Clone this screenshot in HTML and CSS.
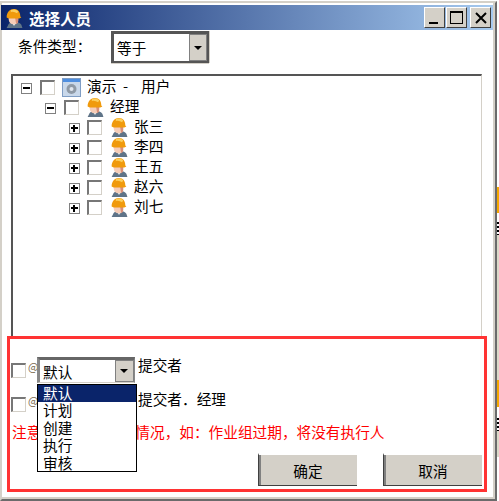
FILE: index.html
```html
<!DOCTYPE html>
<html lang="zh-CN">
<head>
    <meta charset="UTF-8">
    <title>选择人员</title>
    <link rel="stylesheet" href="styles.css">
</head>
<body>
    <svg class="defs" width="0" height="0">
        <symbol id="worker" viewBox="1 0 16 19">
            <path d="M3 17c1-3 3-4 6-4s6 1 7 3l1 3H2z" fill="#5f7488"/>
            <path d="M7 14l2 3 2-3z" fill="#e8eef2"/>
            <path d="M4 8h9v4c0 2-2 3.500-4.500 3.500S4 14 4 11z" fill="#f6cdb8"/>
            <path d="M10 9h3v3c0 2-1 3-2 3z" fill="#d98f78"/>
            <path d="M2 9c0-5 3-8 7-8s6 3 6 7l1 1-2 1H4z" fill="#f09a0c"/>
            <path d="M6 2c2-1 5-1 7 1l-1 2c-2-1-4-2-6-1z" fill="#fbcf5e"/>
        </symbol>
    </svg>

    <div class="side-strip">
        <div class="side-band orange-a"></div>
        <div class="side-band mark-a"></div>
        <div class="side-band pale-a"></div>
        <div class="side-band orange-b"></div>
        <div class="side-band mark-b"></div>
        <div class="side-band pale-b"></div>
    </div>

    <div class="window">
        <div class="titlebar">
            <svg class="title-icon"><use href="#worker"/></svg>
            <span class="title-text">选择人员</span>
            <div class="win-btns">
                <div class="win-btn"><span class="min-mark"></span></div>
                <div class="win-btn"><span class="max-mark"></span></div>
                <div class="win-btn close-btn">
                    <svg width="12" height="12" viewBox="0 0 12 12"><path d="M1 1l10 10M11 1L1 11" stroke="#000" stroke-width="2"/></svg>
                </div>
            </div>
        </div>

        <div class="cond-row">
            <span class="cond-label">条件类型：</span>
            <div class="combo cond-combo">
                <span class="combo-value">等于</span>
                <span class="combo-arrow"></span>
            </div>
        </div>

        <div class="tree">
            <div class="tree-row">
                <span class="expander minus"></span>
                <span class="check"></span>
                <svg class="demo-icon" viewBox="0 0 19 19">
                    <rect x="0.500" y="0.500" width="18" height="18" fill="#c9d8ea" stroke="#7f9dc4"/>
                    <rect x="1" y="1" width="17" height="3" fill="#4f8fe0"/>
                    <circle cx="9.500" cy="11" r="5" fill="#8f9aa6"/>
                    <circle cx="9.500" cy="11" r="2" fill="#dfe6ee"/>
                </svg>
                <span class="node-text">演示  -    用户</span>
            </div>
            <div class="tree-row lvl2">
                <span class="expander minus"></span>
                <span class="check"></span>
                <svg class="worker-icon"><use href="#worker"/></svg>
                <span class="node-text">经理</span>
            </div>
            <div class="tree-row lvl3">
                <span class="expander plus"></span>
                <span class="check"></span>
                <svg class="worker-icon"><use href="#worker"/></svg>
                <span class="node-text">张三</span>
            </div>
            <div class="tree-row lvl3">
                <span class="expander plus"></span>
                <span class="check"></span>
                <svg class="worker-icon"><use href="#worker"/></svg>
                <span class="node-text">李四</span>
            </div>
            <div class="tree-row lvl3">
                <span class="expander plus"></span>
                <span class="check"></span>
                <svg class="worker-icon"><use href="#worker"/></svg>
                <span class="node-text">王五</span>
            </div>
            <div class="tree-row lvl3">
                <span class="expander plus"></span>
                <span class="check"></span>
                <svg class="worker-icon"><use href="#worker"/></svg>
                <span class="node-text">赵六</span>
            </div>
            <div class="tree-row lvl3">
                <span class="expander plus"></span>
                <span class="check"></span>
                <svg class="worker-icon"><use href="#worker"/></svg>
                <span class="node-text">刘七</span>
            </div>
        </div>

        <div class="lower-panel">
            <div class="opt-row first">
                <span class="check"></span>
                <span class="at-mark">@</span>
                <div class="combo opt-combo">
                    <span class="combo-value">默认</span>
                    <span class="combo-arrow"></span>
                </div>
                <span class="opt-text">提交者</span>
            </div>
            <div class="opt-row second">
                <span class="check"></span>
                <span class="at-mark">@</span>
                <div class="opt-combo-spacer"></div>
                <span class="opt-text">提交者．经理</span>
            </div>
            <div class="note">
                <span>注意</span>
                <span class="note-rest">情况，如：作业组过期，将没有执行人</span>
            </div>
            <div class="btn-row">
                <div class="btn">确定</div>
                <div class="btn">取消</div>
            </div>
            <ul class="drop-list">
                <li class="selected">默认</li>
                <li>计划</li>
                <li>创建</li>
                <li>执行</li>
                <li>审核</li>
            </ul>
            <div class="red-box"></div>
        </div>
    </div>
</body>
</html>
```

FILE: styles.css
```css
html, body {
    margin: 0;
    padding: 0;
    height: 501px;
    overflow: hidden;
    background: #fff;
    font-family: "Noto Sans CJK SC", "Liberation Sans", sans-serif;
    font-size: 14.67px;
    color: #000;
}
.defs {
    position: absolute;
}
.side-strip {
    position: absolute;
    left: 497px;
    top: 0;
    width: 2px;
    height: 501px;
}
.side-band {
    position: absolute;
    left: 0;
    width: 2px;
}
.orange-a {
    top: 187px;
    height: 26px;
    background: #f5a800;
}
.mark-a {
    top: 222px;
    height: 13px;
    background: repeating-linear-gradient(to bottom, #000 0, #000 2px, #fff 2px, #fff 4px);
}
.pale-a {
    top: 235px;
    height: 145px;
    background: #dcd9c9;
}
.orange-b {
    top: 380px;
    height: 27px;
    background: #f5a800;
}
.mark-b {
    top: 418px;
    height: 13px;
    background: repeating-linear-gradient(to bottom, #000 0, #000 2px, #fff 2px, #fff 4px);
}
.pale-b {
    top: 431px;
    height: 26px;
    background: #dcd9c9;
}
.window {
    position: relative;
    box-sizing: border-box;
    width: 497px;
    height: 500px;
    margin-top: 1px;
    padding-right: 2px;
    background: #fff;
    border-top: 2px solid #d4d0c8;
    border-left: 2px solid #d4d0c8;
    border-right: 2px solid #6b6b6b;
    border-bottom: 2px solid #6b6b6b;
    box-shadow: inset -2px -2px 0 #d4d0c8;
    display: flex;
    flex-direction: column;
}
.titlebar {
    height: 25px;
    margin-top: 2px;
    margin-left: -1px;
    display: flex;
    align-items: center;
    background: linear-gradient(to right, #0a246a, #a6caf0);
    flex-shrink: 0;
}
.title-icon {
    width: 18px;
    height: 20px;
    margin-left: 4px;
}
.title-text {
    margin-left: 6px;
    color: #fff;
    font-weight: bold;
    font-size: 15.500px;
}
.win-btns {
    margin-left: auto;
    margin-right: 2px;
    display: flex;
    gap: 1px;
}
.win-btn {
    box-sizing: border-box;
    width: 21px;
    height: 21px;
    background: #d4d0c8;
    border-top: 1px solid #fff;
    border-left: 1px solid #fff;
    border-right: 1px solid #404040;
    border-bottom: 1px solid #404040;
    position: relative;
    display: flex;
    align-items: center;
    justify-content: center;
}
.close-btn {
    margin-left: 2px;
}
.min-mark {
    position: absolute;
    left: 4px;
    bottom: 3px;
    width: 9px;
    height: 2px;
    background: #000;
}
.max-mark {
    box-sizing: border-box;
    width: 13px;
    height: 13px;
    border: 1px solid #000;
    border-top-width: 2px;
}
.cond-row {
    height: 34px;
    display: flex;
    align-items: center;
    padding-left: 16px;
    flex-shrink: 0;
}
.cond-label {
    width: 93px;
    margin-top: -3px;
}
.combo {
    box-sizing: border-box;
    display: flex;
    align-items: center;
    background: #fff;
}
.cond-combo {
    width: 98px;
    height: 32px;
    border-top: 3px solid #555;
    border-left: 3px solid #555;
    border-right: 2px solid #555;
    border-bottom: 2px solid #555;
    box-shadow: 0 1px 0 #d4d0c8, 1px 0 0 #d4d0c8;
}
.opt-combo {
    width: 98px;
    height: 26px;
    border-top: 3px solid #666;
    border-left: 3px solid #888;
    border-right: 1px solid #888;
    border-bottom: 1px solid #d4d0c8;
}
.combo-value {
    flex: 1;
    padding-left: 3px;
}
.combo-arrow {
    box-sizing: border-box;
    width: 18px;
    height: 100%;
    background: #d4d0c8;
    border: 1px solid #808080;
    position: relative;
}
.combo-arrow::after {
    content: "";
    position: absolute;
    left: 4px;
    top: 50%;
    margin-top: -2px;
    border-top: 4px solid #000;
    border-left: 4px solid transparent;
    border-right: 4px solid transparent;
}
.tree {
    box-sizing: border-box;
    margin: 10px 0 0 9px;
    width: 471px;
    height: 262px;
    padding-top: 2px;
    border-top: 2px solid #555;
    border-left: 2px solid #555;
    border-right: 1px solid #d4d0c8;
    flex-shrink: 0;
}
.tree-row {
    height: 20px;
    display: flex;
    align-items: center;
    padding-left: 8px;
}
.tree-row.lvl2 {
    padding-left: 32px;
}
.tree-row.lvl3 {
    padding-left: 56px;
}
.expander {
    box-sizing: border-box;
    width: 11px;
    height: 11px;
    border: 1px solid #808080;
    position: relative;
    flex-shrink: 0;
}
.expander::before {
    content: "";
    position: absolute;
    left: 1px;
    top: 3px;
    width: 7px;
    height: 2px;
    background: #000;
}
.expander.plus::after {
    content: "";
    position: absolute;
    left: 3px;
    top: 1px;
    width: 2px;
    height: 7px;
    background: #000;
}
.check {
    box-sizing: border-box;
    display: block;
    width: 15px;
    height: 15px;
    background: #fff;
    border-top: 2px solid #777;
    border-left: 2px solid #777;
    border-right: 1px solid #d4d0c8;
    border-bottom: 1px solid #d4d0c8;
    flex-shrink: 0;
}
.tree-row .check {
    margin-left: 8px;
    margin-top: -1px;
}
.tree-row.lvl3 .check {
    margin-left: 7px;
    margin-top: -2px;
}
.worker-icon {
    width: 18px;
    height: 20px;
    margin-left: 7px;
    margin-top: -2px;
    flex-shrink: 0;
}
.tree-row.lvl3 .worker-icon {
    margin-left: 8px;
}
.demo-icon {
    width: 19px;
    height: 19px;
    margin-left: 7px;
    margin-top: -2px;
    flex-shrink: 0;
}
.node-text {
    margin-left: 6px;
    margin-top: -5px;
    white-space: pre;
}
.lower-panel {
    position: relative;
    flex: 1;
}
.opt-row {
    display: flex;
    align-items: center;
    padding-left: 9px;
    position: absolute;
    left: 0;
}
.opt-row.first {
    top: 21px;
}
.opt-row.second {
    top: 55px;
}
.at-mark {
    width: 9px;
    font-size: 11px;
    color: #7a6a50;
    text-align: center;
    margin-left: 2px;
    margin-top: -8px;
}
.opt-combo .combo-arrow {
    width: 19px;
}
.opt-combo-spacer {
    width: 98px;
    height: 26px;
}
.opt-text {
    margin-left: 3px;
    margin-top: -12px;
}
.note {
    position: absolute;
    left: 10px;
    top: 85px;
    color: #ff0000;
    white-space: nowrap;
    display: flex;
}
.note-rest {
    margin-left: 94px;
}
.btn-row {
    position: absolute;
    left: 256px;
    top: 117px;
    display: flex;
    gap: 26px;
}
.btn {
    box-sizing: border-box;
    width: 99px;
    height: 33px;
    background: #d4d0c8;
    border-top: 2px solid #fff;
    border-left: 1px solid #404040;
    border-bottom: 1px solid #404040;
    box-shadow: inset 2px 0 0 #808080;
    display: flex;
    align-items: center;
    justify-content: center;
}
.drop-list {
    position: absolute;
    left: 35px;
    top: 48px;
    box-sizing: border-box;
    width: 100px;
    height: 88px;
    margin: 0;
    padding: 0;
    list-style: none;
    background: #fff;
    border: 1px solid #000;
    line-height: 15px;
}
.drop-list li {
    height: 17.400px;
    padding-left: 5px;
}
.drop-list li.selected {
    background: #0a246a;
    color: #fff;
}
.red-box {
    position: absolute;
    left: 5px;
    top: 0;
    box-sizing: border-box;
    width: 480px;
    height: 156px;
    border: 3px solid #ff3333;
}
```
